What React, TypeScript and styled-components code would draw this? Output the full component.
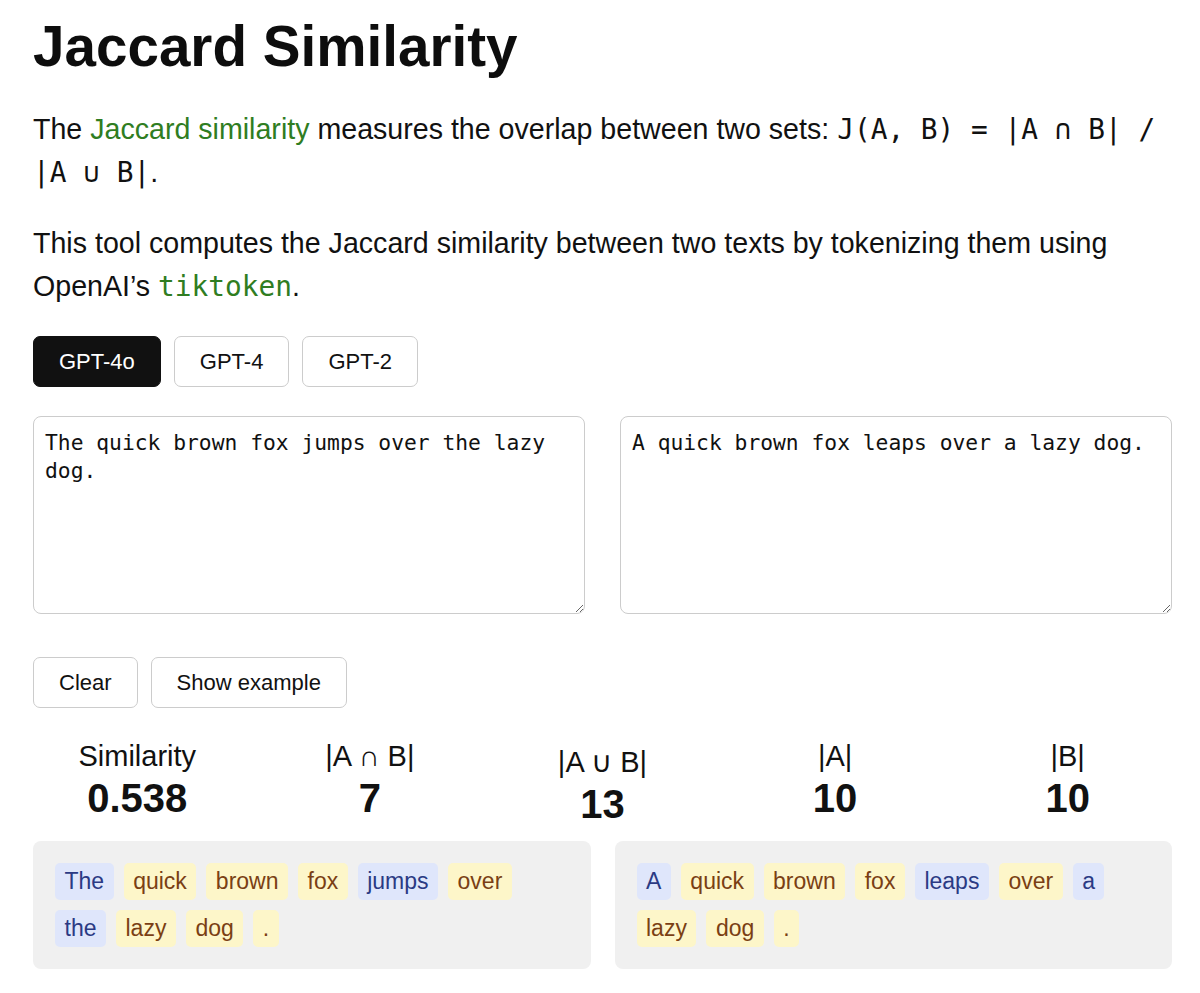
import React from "react";
import styled, { createGlobalStyle } from "styled-components";

const GlobalStyle = createGlobalStyle`
  html, body {
    margin: 0;
    padding: 0;
    background: #ffffff;
  }
  body {
    font-family: "Liberation Sans", Arial, Helvetica, sans-serif;
    color: #111111;
  }
  * { box-sizing: border-box; }
`;

const Page = styled.main`
  padding: 13px 28px 24px 33px;
`;

const Title = styled.h1`
  margin: 0 0 28px;
  font-size: 56.6px;
  line-height: 67px;
  font-weight: 700;
  color: #0d0d0d;
`;

const Paragraph = styled.p`
  margin: 0 0 28px;
  font-size: 28.6px;
  line-height: 43px;
  color: #111111;
`;

const Link = styled.a`
  color: #2f7d22;
  text-decoration: none;
`;

const Code = styled.code<{ $green?: boolean }>`
  font-family: "DejaVu Sans Mono", "Liberation Mono", monospace;
  font-size: 27.8px;
  color: ${(p) => (p.$green ? "#2f7d22" : "#111111")};
`;

const ButtonRow = styled.div<{ $top: number }>`
  display: flex;
  gap: 13px;
  margin-top: ${(p) => p.$top}px;
`;

const Button = styled.button<{ $active?: boolean }>`
  height: 51px;
  padding: 0 25px;
  font-family: "Liberation Sans", Arial, sans-serif;
  font-size: 22px;
  border-radius: 7px;
  border: 1px solid ${(p) => (p.$active ? "#111111" : "#cccccc")};
  background: ${(p) => (p.$active ? "#111111" : "#ffffff")};
  color: ${(p) => (p.$active ? "#ffffff" : "#111111")};
  cursor: pointer;
`;

const Editors = styled.div`
  display: grid;
  grid-template-columns: 1fr 1fr;
  gap: 35px;
  margin-top: 29px;
`;

const TextArea = styled.textarea`
  display: block;
  width: 100%;
  height: 198px;
  padding: 12px 11px;
  font-family: "DejaVu Sans Mono", "Liberation Mono", monospace;
  font-size: 21.3px;
  line-height: 28px;
  color: #111111;
  border: 1px solid #cccccc;
  border-radius: 8px;
  resize: vertical;
  outline: none;
`;

const Stats = styled.div`
  display: grid;
  grid-template-columns: repeat(5, 1fr);
  gap: 24px;
  margin-top: 32px;
  align-items: start;
`;

const Stat = styled.div<{ $drop?: number }>`
  text-align: center;
  padding-top: ${(p) => p.$drop ?? 0}px;
`;

const StatLabel = styled.div`
  font-size: 29px;
  line-height: 32px;
  font-weight: 500;
  color: #111111;
`;

const StatValue = styled.div`
  margin-top: 2px;
  font-size: 40px;
  line-height: 48px;
  font-weight: 700;
  color: #111111;
`;

const Panels = styled.div`
  display: grid;
  grid-template-columns: 1fr 1fr;
  gap: 24px;
  margin-top: 13px;
`;

const TokenPanel = styled.div`
  display: flex;
  flex-wrap: wrap;
  align-content: flex-start;
  gap: 10px;
  padding: 22px;
  background: #f0f0f0;
  border-radius: 8px;
`;

const Token = styled.span<{ $shared: boolean }>`
  display: inline-block;
  padding: 4px 9.5px;
  font-size: 23px;
  line-height: 29px;
  border-radius: 5px;
  background: ${(p) => (p.$shared ? "#fdf6c9" : "#dfe6fb")};
  color: ${(p) => (p.$shared ? "#7a3f14" : "#2b3a84")};
`;

type Tok = { text: string; shared: boolean };

const tokensA: Tok[] = [
  { text: "The", shared: false },
  { text: "quick", shared: true },
  { text: "brown", shared: true },
  { text: "fox", shared: true },
  { text: "jumps", shared: false },
  { text: "over", shared: true },
  { text: "the", shared: false },
  { text: "lazy", shared: true },
  { text: "dog", shared: true },
  { text: ".", shared: true },
];

const tokensB: Tok[] = [
  { text: "A", shared: false },
  { text: "quick", shared: true },
  { text: "brown", shared: true },
  { text: "fox", shared: true },
  { text: "leaps", shared: false },
  { text: "over", shared: true },
  { text: "a", shared: false },
  { text: "lazy", shared: true },
  { text: "dog", shared: true },
  { text: ".", shared: true },
];

const stats = [
  { label: "Similarity", value: "0.538", drop: 0 },
  { label: "|A ∩ B|", value: "7", drop: 0 },
  { label: "|A ∪ B|", value: "13", drop: 6 },
  { label: "|A|", value: "10", drop: 0 },
  { label: "|B|", value: "10", drop: 0 },
];

export default function App() {
  return (
    <>
      <GlobalStyle />
      <Page>
        <Title>Jaccard Similarity</Title>
        <Paragraph>
          The <Link href="#">Jaccard similarity</Link> measures the overlap between two sets:{" "}
          <Code>J(A, B) = |A ∩ B| / |A ∪ B|</Code>.
        </Paragraph>
        <Paragraph>
          This tool computes the Jaccard similarity between two texts by tokenizing them using
          OpenAI’s <Code $green>tiktoken</Code>.
        </Paragraph>

        <ButtonRow $top={0}>
          <Button $active>GPT-4o</Button>
          <Button>GPT-4</Button>
          <Button>GPT-2</Button>
        </ButtonRow>

        <Editors>
          <TextArea defaultValue="The quick brown fox jumps over the lazy dog." />
          <TextArea defaultValue="A quick brown fox leaps over a lazy dog." />
        </Editors>

        <ButtonRow $top={43}>
          <Button>Clear</Button>
          <Button>Show example</Button>
        </ButtonRow>

        <Stats>
          {stats.map((s) => (
            <Stat key={s.label} $drop={s.drop}>
              <StatLabel>{s.label}</StatLabel>
              <StatValue>{s.value}</StatValue>
            </Stat>
          ))}
        </Stats>

        <Panels>
          <TokenPanel>
            {tokensA.map((t, i) => (
              <Token key={i} $shared={t.shared}>
                {t.text}
              </Token>
            ))}
          </TokenPanel>
          <TokenPanel>
            {tokensB.map((t, i) => (
              <Token key={i} $shared={t.shared}>
                {t.text}
              </Token>
            ))}
          </TokenPanel>
        </Panels>
      </Page>
    </>
  );
}
